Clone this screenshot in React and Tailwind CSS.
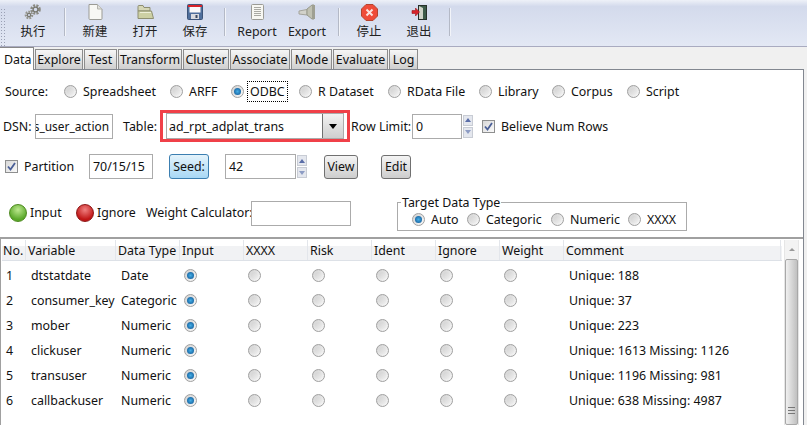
import React from 'react';

const font = { fontFamily: '"Noto Sans", "Noto Sans CJK SC", sans-serif' };

function Radio({ checked }) {
  return (
    <span className="flex w-[13px] h-[13px] shrink-0 items-center justify-center rounded-full border border-[#a0a0a0] bg-gradient-to-br from-[#d0d0d0] to-[#fafafa]">
      <span className={'w-[7px] h-[7px] rounded-full ' + (checked ? 'bg-[radial-gradient(circle,#45aee6,#0b4f8e)]' : 'bg-gradient-to-br from-[#d2d2d2] to-[#efefef]')} />
    </span>
  );
}

function RadioItem({ label, checked, focus, w }) {
  return (
    <div className="flex items-center gap-[6px] shrink-0" style={{ width: w }}>
      <Radio checked={checked} />
      <span className={focus ? 'outline-1 outline-dotted outline-black -ml-[2px] px-[2px] py-[2px]' : ''}>{label}</span>
    </div>
  );
}

function Checkbox() {
  return (
    <span className="flex w-[13px] h-[13px] shrink-0 items-center justify-center border border-[#8e8f8f] bg-gradient-to-br from-[#d8d8d8] to-[#fafafa]">
      <svg width="9" height="9" viewBox="0 0 9 9"><path d="M1 4.5 L3.5 7.5 L8 1" fill="none" stroke="#4a5f97" strokeWidth="1.8" /></svg>
    </span>
  );
}

function Spinner() {
  return (
    <div className="flex flex-col w-[10px] h-[23px] gap-px ml-px">
      <div className="flex-1 flex items-center justify-center border border-[#c8ccd4] bg-[#e4e7ee]">
        <span className="w-0 h-0 border-x-[3px] border-x-transparent border-b-[4px] border-b-[#5a6ea8]" />
      </div>
      <div className="flex-1 flex items-center justify-center border border-[#c8ccd4] bg-[#e4e7ee]">
        <span className="w-0 h-0 border-x-[3px] border-x-transparent border-t-[4px] border-t-[#8d9cc4]" />
      </div>
    </div>
  );
}

function Button({ children, className }) {
  return (
    <button className={'h-[24px] flex items-center justify-center rounded-[3px] border border-[#707070] bg-gradient-to-b from-[#f4f4f4] to-[#cdcdcd] ' + className}>
      {children}
    </button>
  );
}

function Field({ children, className }) {
  return <div className={'h-[25px] shrink-0 flex items-center border border-[#ababab] bg-white overflow-hidden whitespace-nowrap ' + className}>{children}</div>;
}

const Gears = () => (
  <svg width="18" height="16" viewBox="0 0 18 16">
    <circle cx="11.5" cy="5.5" r="4" fill="none" stroke="#8a8a82" strokeWidth="2.6" strokeDasharray="2 1.2" />
    <circle cx="11.5" cy="5.5" r="2.4" fill="none" stroke="#77776f" strokeWidth="1.3" />
    <circle cx="5" cy="11" r="3.2" fill="none" stroke="#94948c" strokeWidth="2.2" strokeDasharray="1.8 1" />
    <circle cx="5" cy="11" r="1.7" fill="none" stroke="#77776f" strokeWidth="1.2" />
  </svg>
);
const NewFile = () => (
  <svg width="15" height="16" viewBox="0 0 15 16">
    <path d="M1 .5 H9.5 L14 5 V14.5 Q14 15.5 13 15.5 H2 Q1 15.5 1 14.5 Z" fill="#f8f8f4" stroke="#9b9b95" />
    <path d="M9.5 .5 V5 H14" fill="#e2e2dc" stroke="#b4b4ae" />
  </svg>
);
const Folder = () => (
  <svg width="17" height="14" viewBox="0 0 17 14">
    <path d="M1 1.5 Q1 .5 2 .5 H6 L7 2.5 H13 V6 H1 Z" fill="#d6d7b6" stroke="#8e8f72" />
    <path d="M1 6 H14.5 L16.5 13.5 H1 Z" fill="#cdd0a4" stroke="#8e8f72" />
    <path d="M3 7.5 H14" stroke="#eeefd8" />
  </svg>
);
const Save = () => (
  <svg width="16" height="16" viewBox="0 0 16 16">
    <rect x=".5" y=".5" width="15" height="15" rx="1" fill="#4f6f9c" stroke="#3c5478" />
    <rect x="1" y="1" width="14" height="2" fill="#d8242a" />
    <rect x="2.5" y="3" width="11" height="5.5" fill="#fafafa" />
    <rect x="4" y="10" width="8" height="5" fill="#d9dbdf" />
    <rect x="8.5" y="11" width="2" height="3" fill="#3c4a60" />
  </svg>
);
const Report = () => (
  <svg width="13" height="16" viewBox="0 0 13 16">
    <rect x=".5" y=".5" width="12" height="15" rx="1" fill="#f7f7f2" stroke="#9b9b95" />
    <path d="M3 3.5H10M3 5.5H10M3 7.5H10M3 9.5H10M3 11.5H10" stroke="#a9a9a3" />
  </svg>
);
const Export = () => (
  <svg width="18" height="16" viewBox="0 0 18 16">
    <path d="M1 7 L9 5.5 V11 L1 10 Z" fill="#d2d2ca" stroke="#a4a49b" />
    <path d="M9 5 L14 1 H16 V15 H14 L9 11 Z" fill="#c0c1b2" stroke="#989a8c" />
    <rect x="14" y="1" width="3" height="14" fill="#9fa092" />
  </svg>
);
const Stop = () => (
  <svg width="17" height="17" viewBox="0 0 17 17">
    <path d="M5 .5 H12 L16.5 5 V12 L12 16.5 H5 L.5 12 V5 Z" fill="#ef4c39" stroke="#b5442f" />
    <path d="M5.5 5.5 L11.5 11.5 M11.5 5.5 L5.5 11.5" stroke="#fbe4df" strokeWidth="2" />
  </svg>
);
const Exit = () => (
  <svg width="16" height="15" viewBox="0 0 16 15">
    <rect x="7.5" y=".5" width="8" height="14" fill="#3d5b49" stroke="#26302a" />
    <path d="M8 1 L12 3 V14 L8 14 Z" fill="#cfd3c8" />
    <path d="M1 5.5 H4.5 V3 L8.5 7 L4.5 11 V8.5 H1 Z" fill="#d8232a" stroke="#9b1a1e" strokeWidth=".6" />
  </svg>
);

function ToolButton({ icon, label, className }) {
  return (
    <div className={'flex flex-col items-center shrink-0 ' + className}>
      <div className="h-[18px] mt-[3px] flex items-center justify-center">{icon}</div>
      <span className="mt-[2px] leading-[17px] text-[12.4px] text-[#222]">{label}</span>
    </div>
  );
}

const Sep = () => <div className="w-[2px] h-[28px] mt-[8px] shrink-0 bg-[#f2f4f9] border-l border-[#b4b9c6]" />;

const tabs = [
  ['Explore', 'w-[48px]'], ['Test', 'w-[33px]'], ['Transform', 'w-[64px]'], ['Cluster', 'w-[46px]'],
  ['Associate', 'w-[60px]'], ['Mode', 'w-[41px]'], ['Evaluate', 'w-[55px]'], ['Log', 'w-[29px]'],
];

const headers = ['No.', 'Variable', 'Data Type', 'Input', 'XXXX', 'Risk', 'Ident', 'Ignore', 'Weight', 'Comment'];
const rows = [
  ['1', 'dtstatdate', 'Date', 'Unique: 188'],
  ['2', 'consumer_key', 'Categoric', 'Unique: 37'],
  ['3', 'mober', 'Numeric', 'Unique: 223'],
  ['4', 'clickuser', 'Numeric', 'Unique: 1613 Missing: 1126'],
  ['5', 'transuser', 'Numeric', 'Unique: 1196 Missing: 981'],
  ['6', 'callbackuser', 'Numeric', 'Unique: 638 Missing: 4987'],
];
const cols = 'grid grid-cols-[24px_90px_64px_64px_64px_64px_64px_64px_64px_217px]';

export default function App() {
  return (
    <div className="w-[807px] h-[425px] overflow-hidden bg-[#f0f0f0] text-[12.4px] leading-[15px] text-[#111]" style={font}>
      {/* toolbar */}
      <div className="relative h-[47px] flex border-b border-[#a9abc0] bg-gradient-to-b from-[#eef1f8] via-[#d3daec] via-[14%] to-[#e3e8f4] pl-[2px]">
        <svg className="absolute left-0 top-[8px]" width="7" height="38">
          <pattern id="grip" width="3" height="3" patternUnits="userSpaceOnUse">
            <rect width="1" height="1" x="1" y="1" fill="#9aa0b4" />
          </pattern>
          <rect width="7" height="38" fill="url(#grip)" />
        </svg>
        <ToolButton icon={<Gears />} label="执行" className="w-[62px]" />
        <Sep />
        <ToolButton icon={<NewFile />} label="新建" className="w-[58px]" />
        <ToolButton icon={<Folder />} label="打开" className="w-[42px]" />
        <ToolButton icon={<Save />} label="保存" className="w-[58px]" />
        <Sep />
        <ToolButton icon={<Report />} label="Report" className="w-[62px]" />
        <ToolButton icon={<Export />} label="Export" className="w-[38px] mr-[12px]" />
        <Sep />
        <ToolButton icon={<Stop />} label="停止" className="w-[58px]" />
        <ToolButton icon={<Exit />} label="退出" className="w-[42px] mr-[9px]" />
        <Sep />
      </div>

      {/* tabs */}
      <div className="h-[22px] flex items-end relative z-10">
        <div className="w-[34px] h-[23px] -mb-px pl-[4px] flex items-center bg-white border-r border-t border-[#888] overflow-hidden">Data</div>
        {tabs.map(([t, w]) => (
          <div key={t} className={'h-[20px] flex items-center justify-center overflow-hidden whitespace-nowrap ml-px border border-b-0 border-[#8c8c8c] bg-gradient-to-b from-[#f6f6f6] to-[#cfcfcf] ' + w}>{t}</div>
        ))}
      </div>

      {/* panel */}
      <div className="w-[804px] h-[356px] bg-white border-t border-r border-[#828790] flex flex-col">
        <div className="flex items-center h-[25px] mt-[9px] pl-[5px]">
          <span className="w-[59px]">Source:</span>
          <RadioItem label="Spreadsheet" w={106} />
          <RadioItem label="ARFF" w={61} />
          <RadioItem label="ODBC" checked focus w={68} />
          <RadioItem label="R Dataset" w={89} />
          <RadioItem label="RData File" w={91} />
          <RadioItem label="Library" w={73} />
          <RadioItem label="Corpus" w={75} />
          <RadioItem label="Script" w={70} />
        </div>

        <div className="flex items-center h-[32px] mt-[6px] pl-[3px]">
          <span className="w-[32px]">DSN:</span>
          <Field className="w-[78px] justify-end pr-[3px] text-[11.9px]">s_user_action</Field>
          <span className="ml-[10px] w-[37px]">Table:</span>
          <div className="w-[190px] h-[32px] shrink-0 flex border-[3px] border-[#f04048] px-[3px]">
            <div className="flex-1 flex items-center justify-between border border-[#ababab] pl-[2px]">
              <span>ad_rpt_adplat_trans</span>
              <span className="w-[21px] h-full flex items-center justify-center border-l border-[#707070] bg-gradient-to-b from-[#f2f2f2] to-[#cfcfcf]">
                <span className="w-0 h-0 border-x-[4px] border-x-transparent border-t-[5px] border-t-black" />
              </span>
            </div>
          </div>
          <span className="ml-px w-[61px] whitespace-nowrap">Row Limit:</span>
          <Field className="w-[50px] pl-[3px]">0</Field>
          <Spinner />
          <span className="ml-[9px]"><Checkbox /></span>
          <span className="ml-[6px]">Believe Num Rows</span>
        </div>

        <div className="flex items-center h-[25px] mt-[12px] pl-[5px]">
          <Checkbox />
          <span className="ml-[6px] w-[65px]">Partition</span>
          <Field className="w-[64px] pl-[3px]">70/15/15</Field>
          <button className="ml-[16px] w-[40px] h-[25px] rounded-[3px] border border-[#3c7fb1] bg-gradient-to-b from-[#e4f3fb] to-[#a8d8f5]">Seed:</button>
          <Field className="ml-[16px] w-[71px] pl-[3px]">42</Field>
          <Spinner />
          <Button className="ml-[17px] w-[34px]">View</Button>
          <Button className="ml-[23px] w-[30px]">Edit</Button>
        </div>

        <div className="flex items-start h-[58px] pl-[9px]">
          <span className="mt-[25px] w-[18px] h-[18px] rounded-full border border-[#4d8a1e] bg-[radial-gradient(circle_at_50%_30%,#bce88e,#5aa82a_70%)] shrink-0" />
          <span className="mt-[26px] ml-[3px] w-[46px]">Input</span>
          <span className="mt-[25px] w-[18px] h-[18px] rounded-full border border-[#8c1414] bg-[radial-gradient(circle_at_50%_30%,#f08080,#c01616_70%)] shrink-0" />
          <span className="mt-[26px] ml-[3px] w-[49px]">Ignore</span>
          <span className="mt-[26px] w-[105px] whitespace-nowrap">Weight Calculator:</span>
          <Field className="mt-[22px] w-[100px]" />
          <div className="relative mt-[23px] ml-[46px] w-[290px] h-[29px] border border-[#ababab] flex items-center pl-[14px] pt-[6px]">
            <span className="absolute -top-[8px] left-[3px] bg-white px-[1px] whitespace-nowrap">Target Data Type</span>
            <RadioItem label="Auto" checked w={55} />
            <RadioItem label="Categoric" w={84} />
            <RadioItem label="Numeric" w={77} />
            <RadioItem label="XXXX" w={50} />
          </div>
        </div>

        {/* variables table */}
        <div className="flex-1 min-h-0 border-t-[2px] border-[#a0a0a0] pt-px flex border-l border-l-[#a0a0a0]">
          <div className="w-[781px] shrink-0 pl-px">
            <div className={cols + ' h-[21px] mb-[2px] border-b border-[#dde1e7] bg-gradient-to-b from-white from-30% to-[#f1f2f4] to-30%'}>
              {headers.map((h, i) => (
                <div key={h} className={'flex items-center pt-px overflow-hidden whitespace-nowrap border-r border-[#e3e6eb] ' + (i === 0 ? 'pl-px' : 'pl-[2px]')}>{h}</div>
              ))}
            </div>
            {rows.map((r) => (
              <div key={r[0]} className={cols + ' h-[25px] items-center'}>
                <div className="pl-[4px]">{r[0]}</div>
                <div className="pl-[5px] whitespace-nowrap">{r[1]}</div>
                <div className="pl-[5px] whitespace-nowrap">{r[2]}</div>
                {[true, false, false, false, false, false].map((c, i) => (
                  <div key={i} className="pl-[4px]"><Radio checked={c} /></div>
                ))}
                <div className="pl-[5px] whitespace-nowrap">{r[3]}</div>
              </div>
            ))}
          </div>
          <div className="w-[15px] ml-[2px] h-full flex flex-col items-center border-x border-[#e6e6e6] bg-[#f3f3f3]">
            <div className="h-[19px] shrink-0 flex items-center justify-center">
              <span className="w-0 h-0 border-x-[3px] border-x-transparent border-b-[3px] border-b-[#9a9a9a]" />
            </div>
            <div className="w-full flex-1 flex items-end justify-center pb-[10px] rounded-[2px] border border-[#a8a8a8] bg-gradient-to-r from-[#f0f0f0] to-[#c0c0c0]">
              <svg width="7" height="7" viewBox="0 0 7 7"><path d="M0 .5H7M0 3.5H7M0 6.5H7" stroke="#777" /></svg>
            </div>
          </div>
        </div>
      </div>
    </div>
  );
}
